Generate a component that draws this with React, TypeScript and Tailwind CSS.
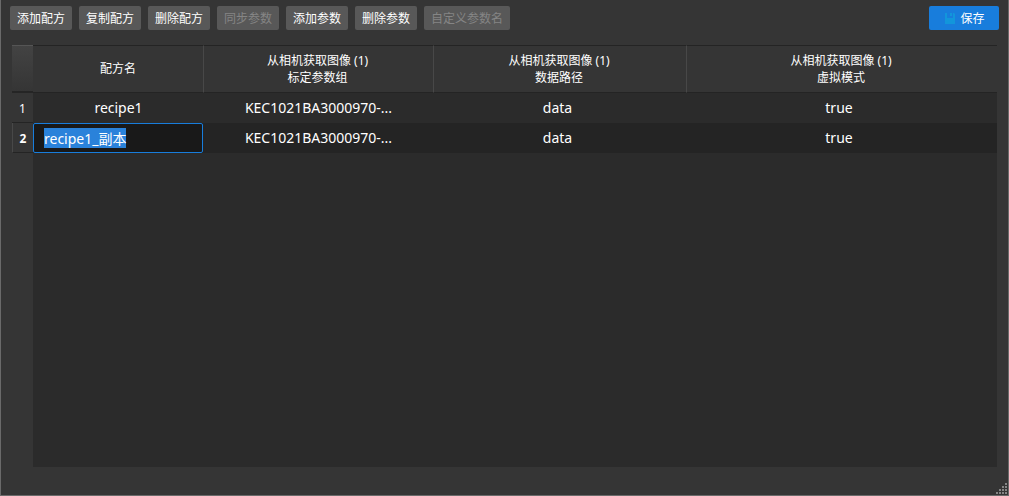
import { useState } from "react";
import type { FocusEvent } from "react";
import clsx from "clsx";

interface Action {
  label: string;
  disabled?: boolean;
}

interface Recipe {
  name: string;
  calibration: string;
  path: string;
  virtual: string;
}

const actions: Action[] = [
  { label: "添加配方" },
  { label: "复制配方" },
  { label: "删除配方" },
  { label: "同步参数", disabled: true },
  { label: "添加参数" },
  { label: "删除参数" },
  { label: "自定义参数名", disabled: true },
];

const columns = [
  { source: "从相机获取图像 (1)", param: "标定参数组", width: "w-[230px]" },
  { source: "从相机获取图像 (1)", param: "数据路径", width: "w-[253px]" },
  { source: "从相机获取图像 (1)", param: "虚拟模式", width: "" },
];

const recipes: Recipe[] = [
  { name: "recipe1", calibration: "KEC1021BA3000970-...", path: "data", virtual: "true" },
  { name: "recipe1_副本", calibration: "KEC1021BA3000970-...", path: "data", virtual: "true" },
];

function SaveIcon() {
  return (
    <svg width="10" height="11" viewBox="0 0 10 11" aria-hidden="true">
      <path d="M0 0h2v5h6V0h1l1 1v10H0z" fill="#1296db" />
      <path d="M5 0h2v3H5z" fill="#1296db" />
    </svg>
  );
}

function SizeGrip() {
  return (
    <svg width="11" height="11" viewBox="0 0 11 11" aria-hidden="true">
      {[0, 1, 2, 3].map((row) =>
        [0, 1, 2, 3]
          .filter((col) => col >= 3 - row)
          .map((col) => (
            <rect key={`${row}-${col}`} x={col * 3} y={row * 3} width="2" height="2" fill="#858585" />
          ))
      )}
    </svg>
  );
}

function Toolbar() {
  return (
    <div className="flex items-center gap-[7px] pt-[6px] pr-[9px] pl-[9px]">
      {actions.map((action) => (
        <button
          key={action.label}
          type="button"
          disabled={action.disabled}
          className="h-6 shrink-0 rounded-xs bg-[#585858] px-[7px] pt-[2px] text-xs text-white disabled:text-[#858585]"
        >
          {action.label}
        </button>
      ))}
      <button
        type="button"
        className="ml-auto flex h-6 w-[70px] items-center justify-center gap-[5px] rounded-xs bg-[#187ddc] pt-px pl-[2px] text-xs text-white"
      >
        <SaveIcon />
        保存
      </button>
    </div>
  );
}

function RecipeTable() {
  const [editing, setEditing] = useState(recipes[1].name);

  return (
    <table className="w-full table-fixed border-separate border-spacing-0 text-center text-white">
      <thead>
        <tr className="h-12 text-xs">
          <td className="w-[21px] border-t border-b-2 border-t-[#555555] border-b-[#252525] bg-linear-to-b from-[#434343] to-[#353535] p-0" />
          <th className="w-[171px] border-t border-r border-b border-t-[#242424] border-r-[#484848] border-b-[#242424] p-0 font-normal">
            配方名
          </th>
          {columns.map((column, i) => (
            <th
              key={column.param}
              className={clsx(
                "border-t border-b border-t-[#242424] border-b-[#242424] p-0 pr-[2px] leading-[17px] font-normal",
                i < columns.length - 1 && "border-r border-r-[#484848]",
                column.width
              )}
            >
              {column.source}
              <br />
              {column.param}
            </th>
          ))}
        </tr>
      </thead>
      <tbody className="text-sm">
        {recipes.map((recipe, i) => (
          <tr key={recipe.name} className={clsx("h-[30px]", i % 2 ? "bg-[#242424]" : "bg-[#2b2b2b]")}>
            <th
              scope="row"
              className={clsx(
                "border-b border-[#242424] bg-[#353535] p-0 pt-[2px] text-xs",
                i === 1 ? "border-l border-l-[#484848] font-bold" : "font-normal"
              )}
            >
              {i + 1}
            </th>
            <td className="p-0">
              {i === 1 ? (
                <input
                  type="text"
                  aria-label="配方名"
                  autoFocus
                  value={editing}
                  onChange={(e) => setEditing(e.target.value)}
                  onFocus={(e: FocusEvent<HTMLInputElement>) => e.target.select()}
                  className="block h-[30px] w-[170px] rounded-xs border border-[#187ddc] bg-[#191919] px-[10px] leading-5 outline-none selection:bg-[#2a82da] selection:text-white"
                />
              ) : (
                recipe.name
              )}
            </td>
            <td className="p-0 pr-px">{recipe.calibration}</td>
            <td className="p-0 pr-[6px]">{recipe.path}</td>
            <td className="p-0 pr-[6px]">{recipe.virtual}</td>
          </tr>
        ))}
      </tbody>
    </table>
  );
}

export default function App() {
  return (
    <div className="flex min-h-screen flex-col border-r border-b border-l border-[#6a6a6a] bg-[#353535] font-['Noto_Sans','Noto_Sans_CJK_SC',sans-serif]">
      <Toolbar />
      <main className="mt-[15px] mr-[11px] ml-[11px] flex flex-1 flex-col">
        <RecipeTable />
        <div className="ml-[21px] flex-1 bg-[#2b2b2b]" />
      </main>
      <footer className="flex h-7 items-end justify-end pr-px pb-px">
        <SizeGrip />
      </footer>
    </div>
  );
}
